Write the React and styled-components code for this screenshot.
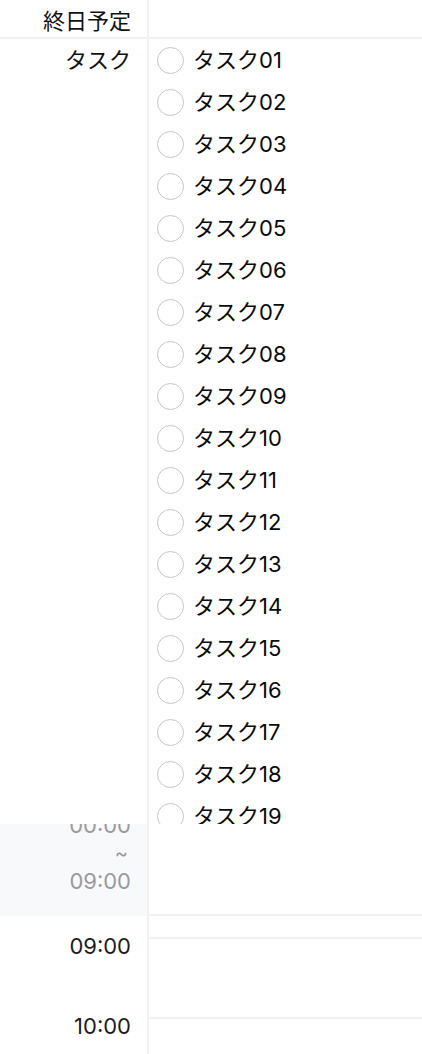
import styled, { createGlobalStyle } from 'styled-components'

const tasks = Array.from({ length: 19 }, (_, i) => `タスク${String(i + 1).padStart(2, '0')}`)
const hours = ['09:00', '10:00']

const lineColor = '#f0f0f5'

const GlobalStyle = createGlobalStyle`
  html, body {
    margin: 0;
    padding: 0;
    background: #ffffff;
  }
  body {
    font-family: "Inter", "Noto Sans CJK JP", sans-serif;
    color: #111111;
    -webkit-font-smoothing: antialiased;
  }
`

const App = () => (
  <>
    <GlobalStyle />
    <Calendar>
      <HeaderRow>
        <Label>終日予定</Label>
        <Cell />
      </HeaderRow>

      <TaskRow>
        <Label>タスク</Label>
        <TaskList>
          {tasks.map((name) => (
            <TaskItem key={name}>
              <Check />
              <TaskName>{name}</TaskName>
            </TaskItem>
          ))}
        </TaskList>
      </TaskRow>

      <NightRow>
        <NightLabel>
          <span>00:00</span>
          <Tilde>~</Tilde>
          <span>09:00</span>
        </NightLabel>
        <NightCell />
      </NightRow>

      <GapRow>
        <Side />
        <Cell />
      </GapRow>

      {hours.map((h) => (
        <HourRow key={h}>
          <HourLabel>{h}</HourLabel>
          <HourCell />
        </HourRow>
      ))}
    </Calendar>
  </>
)

export default App

const Calendar = styled.div`
  width: 422px;
  height: 1054px;
  overflow: hidden;
  display: flex;
  flex-direction: column;
  font-size: 22px;
`

const Row = styled.div`
  display: grid;
  grid-template-columns: 149px 1fr;
  flex-shrink: 0;
`

const Side = styled.div`
  border-right: 2px solid ${lineColor};
`

const Cell = styled.div``

const Label = styled(Side)`
  text-align: right;
  padding-right: 16px;
  line-height: 42px;
  white-space: nowrap;
`

const HeaderRow = styled(Row)`
  height: 37px;
  border-bottom: 2px solid ${lineColor};

  ${Label} {
    line-height: 37px;
    padding-top: 3px;
    box-sizing: border-box;
  }
`

const TaskRow = styled(Row)`
  height: 785px;
  overflow: hidden;
`

const TaskList = styled.ul`
  list-style: none;
  margin: 0;
  padding: 0 0 0 8px;
`

const TaskItem = styled.li`
  height: 42px;
  display: flex;
  align-items: center;
  gap: 9px;
`

const Check = styled.span`
  width: 27px;
  height: 27px;
  box-sizing: border-box;
  border-radius: 50%;
  border: 1.8px solid #c6c6ca;
  flex-shrink: 0;
`

const TaskName = styled.span`
  color: #0a0a0a;
  line-height: 42px;
`

const NightRow = styled(Row)`
  height: 92px;
`

const NightLabel = styled(Side)`
  background: #f8f9fb;
  overflow: hidden;
  display: flex;
  flex-direction: column;
  align-items: flex-end;
  padding-right: 16px;
  color: #9a9a9e;
  line-height: 28px;

  & > span:first-child {
    margin-top: -13px;
  }
`

const Tilde = styled.span`
  font-size: 20px;
  padding-right: 3px;
`

const NightCell = styled.div`
  border-bottom: 2px solid ${lineColor};
`

const GapRow = styled(Row)`
  height: 21px;
`

const HourRow = styled(Row)`
  height: 80px;
`

const HourLabel = styled(Side)`
  text-align: right;
  padding-right: 16px;
  line-height: 28px;
  color: #1c1c1e;

  &::before {
    content: '';
    display: block;
    margin-top: -5px;
  }
`

const HourCell = styled.div`
  border-top: 2px solid ${lineColor};
`
